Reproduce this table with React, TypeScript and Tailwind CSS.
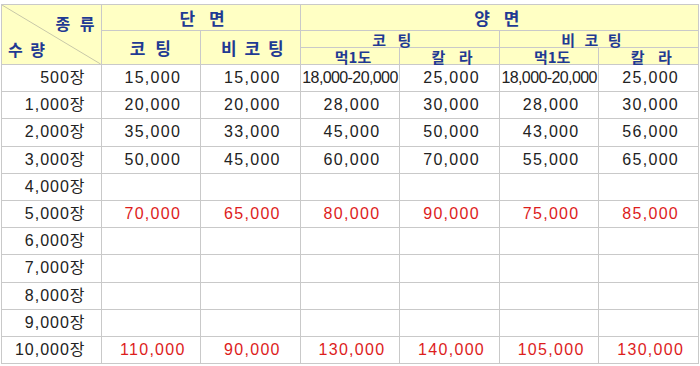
import { Fragment } from "react";

const head = "flex items-center justify-center bg-[#FFFFC4] text-[#1F3A93] font-bold font-['Noto_Sans_CJK_KR',sans-serif] whitespace-nowrap";
const rows: { q: string; v: string[]; red?: boolean }[] = [
  { q: "500장", v: ["15,000", "15,000", "18,000-20,000", "25,000", "18,000-20,000", "25,000"] },
  { q: "1,000장", v: ["20,000", "20,000", "28,000", "30,000", "28,000", "30,000"] },
  { q: "2,000장", v: ["35,000", "33,000", "45,000", "50,000", "43,000", "56,000"] },
  { q: "3,000장", v: ["50,000", "45,000", "60,000", "70,000", "55,000", "65,000"] },
  { q: "4,000장", v: ["", "", "", "", "", ""] },
  { q: "5,000장", v: ["70,000", "65,000", "80,000", "90,000", "75,000", "85,000"], red: true },
  { q: "6,000장", v: ["", "", "", "", "", ""] },
  { q: "7,000장", v: ["", "", "", "", "", ""] },
  { q: "8,000장", v: ["", "", "", "", "", ""] },
  { q: "9,000장", v: ["", "", "", "", "", ""] },
  { q: "10,000장", v: ["110,000", "90,000", "130,000", "140,000", "105,000", "130,000"], red: true },
];

export default function App() {
  return (
    <div className="w-[700px] h-[366px] bg-white pt-1 pl-px font-['Liberation_Sans','Noto_Sans_CJK_KR',sans-serif]">
      <div className="grid w-[698px] grid-cols-7 grid-rows-[25px_16px_16px_repeat(11,26.2px)] gap-px bg-[#C9C9C9] p-px">
        {/* corner */}
        <div className="relative col-start-1 row-start-1 row-span-3 bg-[#FFFFC4] text-[#1F3A93] font-bold font-['Noto_Sans_CJK_KR',sans-serif] text-[16px] leading-none">
          <svg className="absolute inset-0 h-full w-full" viewBox="0 0 100 60" preserveAspectRatio="none">
            <line x1="0" y1="0" x2="100" y2="60" stroke="#C8C8A8" strokeWidth="1" vectorEffect="non-scaling-stroke" />
          </svg>
          <span className="absolute right-[3px] top-[10px] tracking-[3px]">종 류</span>
          <span className="absolute left-[6px] top-[36px] tracking-[2px]">수 량</span>
        </div>
        <div className={`${head} col-span-2 text-[17px] tracking-[5px] pl-[8px]`}>단 면</div>
        <div className={`${head} col-span-4 text-[17px] tracking-[5px]`}>양 면</div>
        <div className={`${head} row-span-2 text-[17px] tracking-[3px] pl-[2px]`}>코 팅</div>
        <div className={`${head} row-span-2 text-[17px] tracking-[2px] pl-[6px]`}>비 코 팅</div>
        <div className={`${head} col-span-2 text-[15px] tracking-[4px] pr-[12px] leading-none`}>코 팅</div>
        <div className={`${head} col-span-2 text-[15px] tracking-[3px] pr-[12px] leading-none`}>비 코 팅</div>
        <div className={`${head} text-[15px] leading-none pl-[6px]`}>먹1도</div>
        <div className={`${head} text-[15px] tracking-[5px] leading-none pl-[10px]`}>칼 라</div>
        <div className={`${head} text-[15px] leading-none pl-[6px]`}>먹1도</div>
        <div className={`${head} text-[15px] tracking-[5px] leading-none pl-[10px]`}>칼 라</div>

        {rows.map((r) => (
          <Fragment key={r.q}>
            <div className="flex items-center justify-end bg-white pr-[15px] text-[16px] tracking-[1px] text-[#222] whitespace-nowrap">
              {r.q}
            </div>
            {r.v.map((v, i) => (
              <div
                key={i}
                className={`flex items-center justify-center bg-white whitespace-nowrap ${
                  v.includes("-") ? "text-[16px] tracking-[-0.6px]" : "pl-[4px] text-[16px] tracking-[1.3px]"
                } ${r.red ? "text-[#DD1C1C]" : "text-[#222]"}`}
              >
                {v}
              </div>
            ))}
          </Fragment>
        ))}
      </div>
    </div>
  );
}
